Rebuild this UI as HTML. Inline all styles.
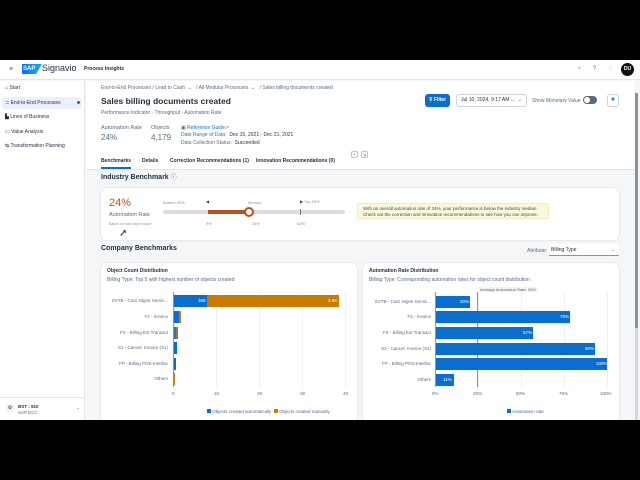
<!DOCTYPE html>
<html><head><meta charset="utf-8"><style>
*{margin:0;padding:0;box-sizing:border-box}
body{width:640px;height:480px;background:#000;position:relative;overflow:hidden;font-family:"Liberation Sans",sans-serif;color:#1d2d3e}
.a{position:absolute;white-space:nowrap}
.s{font-size:5px;color:#556b82}
.card{position:absolute;background:#fff;border-radius:6px;box-shadow:0 0 2px rgba(0,0,0,.15)}
.bar{position:absolute;height:12px}
.bl{background:#0a6ed1}
.or{background:#c87b00}
.lbl{position:absolute;font-size:4.5px;color:#556b82;text-align:right;width:70px}
.ax{position:absolute;font-size:4.5px;color:#556b82}
.vl{position:absolute;font-size:4.5px;color:#fff}
</style></head><body>
<div class="a" style="left:0;top:60px;width:640px;height:360px;background:#f5f6f7"></div>
<!-- header -->
<div class="a" style="left:0;top:60px;width:640px;height:20px;background:#fff;border-bottom:1px solid #e5e5e5"></div>
<div class="a" style="left:9px;top:66px;font-size:7px;color:#556b82">≡</div>
<div class="a" style="left:22px;top:64px;width:20px;height:10px;background:linear-gradient(90deg,#0070f2,#1ab0f0);clip-path:polygon(0 0,100% 0,70% 100%,0 100%);color:#fff;font-size:6px;font-weight:bold;padding-left:1px;line-height:10px">SAP</div>
<div class="a" style="left:42px;top:63px;font-size:9px;color:#1d2d3e">Signavio</div>
<div class="a" style="left:84px;top:66px;font-size:5px;font-weight:bold;color:#1d2d3e">Process Insights</div>
<div class="a" style="left:577px;top:66px;font-size:6px;color:#556b82">◔</div>
<div class="a" style="left:593px;top:66px;font-size:6px;color:#556b82">?</div>
<div class="a" style="left:609px;top:66px;font-size:6px;color:#556b82">◌</div>
<div class="a" style="left:621px;top:63px;width:13px;height:13px;border-radius:50%;background:#111;color:#fff;font-size:5px;font-weight:bold;text-align:center;line-height:13px">DU</div>
<!-- sidebar -->
<div class="a" style="left:0;top:81px;width:85px;height:339px;background:#fff;border-right:1px solid #e5e5e5"></div>
<div class="a" style="left:2px;top:97px;width:80px;height:12px;background:#eaf1fb;border-radius:3px"></div>
<div class="a" style="left:5px;top:85px;font-size:5px">⌂ Start</div>
<div class="a" style="left:5px;top:100px;font-size:5px">⊃ End-to-End Processes</div>
<div class="a" style="left:77px;top:101px;width:3px;height:3px;border-radius:50%;background:#0a6ed1"></div>
<div class="a" style="left:5px;top:114px;font-size:5px">▙ Lines of Business</div>
<div class="a" style="left:5px;top:129px;font-size:5px">▭ Value Analysis</div>
<div class="a" style="left:5px;top:143px;font-size:5px">↹ Transformation Planning</div>
<div class="a" style="left:0;top:397px;width:85px;height:1px;background:#e5e5e5"></div>
<div class="a" style="left:6px;top:404px;width:8px;height:8px;border-radius:2px;background:#eef0f2;font-size:5px;text-align:center;line-height:8px">⚙</div>
<div class="a" style="left:18px;top:404px;font-size:4.5px;font-weight:bold">BST : 910</div>
<div class="a" style="left:18px;top:410px;font-size:4.5px;color:#556b82">SAP ECC</div>
<div class="a" style="left:76px;top:405px;font-size:4.5px;color:#556b82">⌄</div>
<!-- page header -->
<div class="a" style="left:86px;top:81px;width:549px;height:89px;background:#fff;border-bottom:1px solid #e0e3e6"></div>
<div class="a s" style="left:101px;top:85px">End-to-End Processes / Lead to Cash &nbsp;⌄ &nbsp;&nbsp;/ All Modular Processes &nbsp;⌄ &nbsp;&nbsp;/ Sales billing documents created</div>
<div class="a" style="left:101px;top:96px;font-size:8.5px;font-weight:bold">Sales billing documents created</div>
<div class="a s" style="left:101px;top:110px">Performance Indicator · Throughput · Automation Rate</div>
<div class="a" style="left:101px;top:125px;font-size:5.5px;color:#556b82">Automation Rate</div>
<div class="a" style="left:101px;top:133px;font-size:8px;color:#556b82">24%</div>
<div class="a" style="left:151px;top:125px;font-size:5.5px;color:#556b82">Objects</div>
<div class="a" style="left:151px;top:133px;font-size:8px;color:#556b82">4,179</div>
<div class="a" style="left:181px;top:125px;font-size:5px;color:#0a6ed1"><span style="color:#556b82">▣</span> Reference Guide↗</div>
<div class="a s" style="left:181px;top:132px">Date Range of Data: &nbsp;<span style="color:#1d2d3e">Dec 15, 2021 - Dec 21, 2021</span></div>
<div class="a s" style="left:181px;top:140px">Data Collection Status: &nbsp;<span style="color:#1d2d3e">Succeeded</span></div>
<div class="a" style="left:351px;top:151px;width:7px;height:7px;border:1px solid #bcc3ca;border-radius:2px;font-size:4px;text-align:center;line-height:5px">^</div>
<div class="a" style="left:361px;top:151px;width:7px;height:7px;border:1px solid #bcc3ca;border-radius:2px;font-size:4px;color:#0a6ed1;text-align:center;line-height:5px">⇲</div>
<div class="a" style="left:101px;top:158px;font-size:5px;font-weight:bold;color:#1d2d3e">Benchmarks</div>
<div class="a" style="left:101px;top:167px;width:30px;height:2px;background:#0a6ed1"></div>
<div class="a" style="left:142px;top:158px;font-size:5px;font-weight:bold">Details</div>
<div class="a" style="left:170px;top:158px;font-size:5px;font-weight:bold">Correction Recommendations (1)</div>
<div class="a" style="left:256px;top:158px;font-size:5px;font-weight:bold">Innovation Recommendations (0)</div>
<div class="a" style="left:425px;top:94px;width:25px;height:13px;background:#0a6ed1;border-radius:3px;color:#fff;font-size:5px;font-weight:bold;line-height:13px;text-align:center">⊽ Filter</div>
<div class="a" style="left:456px;top:94px;width:71px;height:13px;border:1px solid #cdd3d9;border-radius:3px;font-size:5px;line-height:11px;padding-left:4px">Jul 10, 2024, 9:17 AM ... <span style="position:absolute;right:4px;color:#556b82">⌄</span></div>
<div class="a s" style="left:532px;top:98px">Show Monetary Value</div>
<div class="a" style="left:583px;top:96px;width:14px;height:8px;border-radius:4px;background:#5b6b7c"><div style="position:absolute;left:1px;top:1px;width:6px;height:6px;border-radius:50%;background:#fff"></div></div>
<div class="a" style="left:607px;top:94px;width:12px;height:13px;border:1px solid #cdd3d9;border-radius:3px;font-size:6px;color:#0a6ed1;text-align:center;line-height:11px">★</div>
<div class="a" style="left:635px;top:93px;width:3px;height:327px;background:#d5d9dd"></div>
<div class="a" style="left:635px;top:93px;width:3px;height:235px;background:#8a939c"></div>
<!-- industry benchmark -->
<div class="a" style="left:101px;top:172px;font-size:7px;font-weight:bold">Industry Benchmark <span style="font-weight:normal;font-size:6px;color:#556b82">ⓘ</span></div>
<div class="card" style="left:101px;top:188px;width:518px;height:52px"></div>
<div class="a" style="left:109px;top:197px;font-size:11px;color:#b5541c">24%</div>
<div class="a" style="left:109px;top:212px;font-size:5.5px;color:#556b82">Automation Rate</div>
<div class="a" style="left:109px;top:222px;font-size:3.5px;color:#8396a8">Based on total object count</div>
<div class="a" style="left:163px;top:210px;width:182px;height:4px;border-radius:2px;background:#d9dde1"></div>
<div class="a" style="left:208px;top:210px;width:41px;height:4px;background:#b5541c"></div>
<div class="a" style="left:244px;top:207px;width:10px;height:10px;border-radius:50%;background:#fff;border:2px solid #b5541c"></div>
<div class="a" style="left:300px;top:209px;width:1px;height:6px;background:#6a7785"></div>
<div class="a" style="left:163px;top:200px;font-size:4px;color:#8396a8">Bottom 25%</div>
<div class="a" style="left:206px;top:199px;font-size:4px;color:#333">◀</div>
<div class="a" style="left:248px;top:200px;font-size:4px;color:#8396a8">Median</div>
<div class="a" style="left:300px;top:199px;font-size:4px;color:#333">▶ <span style="color:#8396a8">Top 25%</span></div>
<div class="a" style="left:206px;top:221px;font-size:4px;color:#8396a8">9%</div>
<div class="a" style="left:252px;top:221px;font-size:4px;color:#8396a8">34%</div>
<div class="a" style="left:297px;top:221px;font-size:4px;color:#8396a8">63%</div>
<div class="a" style="left:357px;top:203px;width:192px;height:16px;background:#fdf8dc;border:1px solid #f1ebc4;border-radius:2px;font-size:4.5px;color:#3a4654;padding:2px 5px;line-height:5.5px">With an overall automation rate of 24%, your performance is below the industry median.<br>Check out the correction and innovation recommendations to see how you can improve.</div>
<div class="a" style="left:119px;top:228px;font-size:10px;color:#222">➚</div>
<!-- company benchmarks -->
<div class="a" style="left:101px;top:245px;font-size:7px;font-weight:bold">Company Benchmarks</div>
<div class="a s" style="left:527px;top:248px">Attribute:</div>
<div class="a" style="left:549px;top:244px;width:70px;height:12px;background:#fff;border-bottom:1px solid #8396a8;font-size:5px;line-height:12px;padding-left:2px">Billing Type<span style="position:absolute;right:4px;color:#556b82">⌄</span></div>
<div class="card" style="left:101px;top:263px;width:256px;height:160px"></div>
<div class="card" style="left:363px;top:263px;width:256px;height:160px"></div>
<div class="a" style="left:107px;top:268px;font-size:5px;font-weight:bold">Object Count Distribution</div>
<div class="a s" style="left:107px;top:277px">Billing Type: Top 5 with highest number of objects created</div>
<div class="a" style="left:369px;top:268px;font-size:5px;font-weight:bold">Automation Rate Distribution</div>
<div class="a s" style="left:369px;top:277px">Billing Type: Corresponding automation rates for object count distribution</div>
<!-- left chart -->
<div class="a" style="left:173px;top:292px;width:1px;height:95px;background:#8396a8"></div>
<div class="a" style="left:216px;top:292px;width:1px;height:95px;background:#eef0f2"></div>
<div class="a" style="left:259px;top:292px;width:1px;height:95px;background:#eef0f2"></div>
<div class="a" style="left:302px;top:292px;width:1px;height:95px;background:#eef0f2"></div>
<div class="a" style="left:345px;top:292px;width:1px;height:95px;background:#eef0f2"></div>
<div class="lbl" style="left:98px;top:298px">SVTB - Cust. Mgmt Servic...</div>
<div class="lbl" style="left:98px;top:314px">F2 - Invoice</div>
<div class="lbl" style="left:98px;top:330px">FX - Billing Ext Transact</div>
<div class="lbl" style="left:98px;top:345px">S1 - Cancel. Invoice (S1)</div>
<div class="lbl" style="left:98px;top:361px">FP - Billing POS-Interfac</div>
<div class="lbl" style="left:98px;top:376px">Others</div>
<div class="bar bl" style="left:174px;top:295px;width:33px"></div>
<div class="bar or" style="left:207px;top:295px;width:132px"></div>
<div class="vl" style="left:198px;top:298px">368</div>
<div class="vl" style="left:328px;top:298px">3.5K</div>
<div class="bar bl" style="left:174px;top:311px;width:5px"></div><div class="bar or" style="left:179px;top:311px;width:2px"></div>
<div class="bar bl" style="left:174px;top:327px;width:2px;background:#3a6ea8"></div><div class="bar or" style="left:176px;top:327px;width:2px;background:#8a7a50"></div>
<div class="bar bl" style="left:174px;top:342px;width:3px"></div>
<div class="bar bl" style="left:174px;top:358px;width:2px"></div>
<div class="bar or" style="left:174px;top:373px;width:1px"></div>
<div class="ax" style="left:172px;top:391px">0</div>
<div class="ax" style="left:214px;top:391px">1K</div>
<div class="ax" style="left:257px;top:391px">2K</div>
<div class="ax" style="left:300px;top:391px">3K</div>
<div class="ax" style="left:343px;top:391px">4K</div>
<div class="ax" style="left:207px;top:409px"><span style="display:inline-block;width:4px;height:4px;background:#0a6ed1"></span> Objects created automatically &nbsp;<span style="display:inline-block;width:4px;height:4px;background:#c87b00"></span> Objects created manually</div>
<!-- right chart -->
<div class="a" style="left:435px;top:292px;width:1px;height:95px;background:#8396a8"></div>
<div class="a" style="left:478px;top:292px;width:1px;height:95px;background:#eef0f2"></div>
<div class="a" style="left:521px;top:292px;width:1px;height:95px;background:#eef0f2"></div>
<div class="a" style="left:564px;top:292px;width:1px;height:95px;background:#eef0f2"></div>
<div class="a" style="left:607px;top:292px;width:1px;height:95px;background:#eef0f2"></div>
<div class="a" style="left:477px;top:292px;width:1px;height:95px;background:#8a939c"></div>
<div class="a" style="left:478px;top:287px;font-size:4px;color:#556b82;background:#f3f4f5;padding:0 2px">Average Automation Rate: 24%</div>
<div class="lbl" style="left:361px;top:299px">SVTB - Cust. Mgmt Servic...</div>
<div class="lbl" style="left:361px;top:314px">F2 - Invoice</div>
<div class="lbl" style="left:361px;top:330px">FX - Billing Ext Transact</div>
<div class="lbl" style="left:361px;top:346px">S1 - Cancel. Invoice (S1)</div>
<div class="lbl" style="left:361px;top:361px">FP - Billing POS-Interfac</div>
<div class="lbl" style="left:361px;top:377px">Others</div>
<div class="bar bl" style="left:436px;top:296px;width:34px"></div><div class="vl" style="left:460px;top:299px">20%</div>
<div class="bar bl" style="left:436px;top:311px;width:134px"></div><div class="vl" style="left:560px;top:314px">78%</div>
<div class="bar bl" style="left:436px;top:327px;width:97px"></div><div class="vl" style="left:523px;top:330px">57%</div>
<div class="bar bl" style="left:436px;top:343px;width:159px"></div><div class="vl" style="left:585px;top:346px">90%</div>
<div class="bar bl" style="left:436px;top:358px;width:171px"></div><div class="vl" style="left:596px;top:361px">100%</div>
<div class="bar bl" style="left:436px;top:374px;width:18px"></div><div class="vl" style="left:443px;top:377px">11%</div>
<div class="ax" style="left:432px;top:391px">0%</div>
<div class="ax" style="left:473px;top:391px">25%</div>
<div class="ax" style="left:516px;top:391px">50%</div>
<div class="ax" style="left:559px;top:391px">75%</div>
<div class="ax" style="left:600px;top:391px">100%</div>
<div class="ax" style="left:507px;top:409px"><span style="display:inline-block;width:4px;height:4px;background:#0a6ed1"></span> Automation rate</div>
<!-- bottom black -->
<div class="a" style="left:0;top:420px;width:640px;height:60px;background:#000"></div>
</body></html>
